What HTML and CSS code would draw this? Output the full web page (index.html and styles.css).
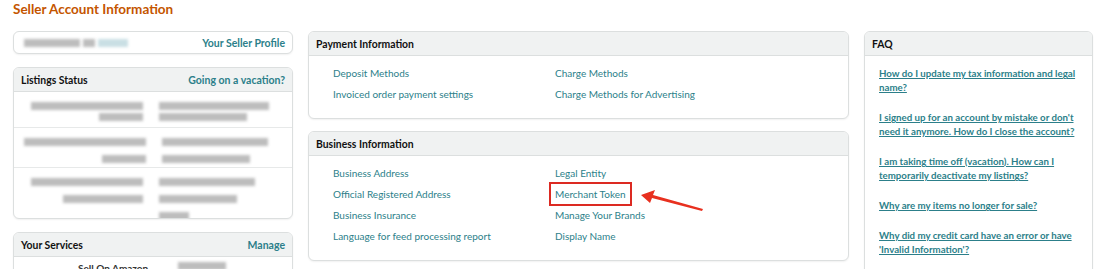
FILE: index.html
```html
<!DOCTYPE html>
<html lang="en">
<head>
    <meta charset="UTF-8">
    <title>Seller Account Information</title>
    <link rel="stylesheet" href="styles.css">
</head>
<body>
    <h1 class="page-title">Seller Account Information</h1>

    <div class="layout">
        <!-- Left column -->
        <div class="column">
            <div class="card profile-card">
                <div class="blur-group">
                    <span class="blur" style="width:56px"></span>
                    <span class="blur" style="width:12px"></span>
                    <span class="blur light" style="width:30px"></span>
                </div>
                <a href="#" class="link strong">Your Seller Profile</a>
            </div>

            <div class="card">
                <div class="card-header">
                    <span>Listings Status</span>
                    <a href="#" class="link strong">Going on a vacation?</a>
                </div>
                <div class="status-row r1">
                    <div class="blur-cell"><span class="blur" style="width:112px"></span><span class="blur" style="width:44px"></span></div>
                    <div class="blur-cell left"><span class="blur" style="width:110px"></span><span class="blur" style="width:88px"></span></div>
                </div>
                <div class="status-row r2">
                    <div class="blur-cell"><span class="blur" style="width:122px"></span><span class="blur" style="width:44px"></span></div>
                    <div class="blur-cell left"><span class="blur" style="width:106px"></span><span class="blur" style="width:88px"></span></div>
                </div>
                <div class="status-row r3">
                    <div class="blur-cell"><span class="blur" style="width:112px"></span><span class="blur" style="width:80px"></span></div>
                    <div class="blur-cell left"><span class="blur" style="width:96px"></span><span class="blur" style="width:78px"></span><span class="blur" style="width:30px"></span></div>
                </div>
            </div>

            <div class="card">
                <div class="card-header">
                    <span>Your Services</span>
                    <a href="#" class="link strong">Manage</a>
                </div>
                <div class="services-row">
                    <span class="service-name">Sell On Amazon</span>
                    <span class="blur" style="width:48px"></span>
                </div>
            </div>
        </div>

        <!-- Middle column -->
        <div class="column middle">
            <div class="card">
                <div class="card-header"><span>Payment Information</span></div>
                <div class="link-grid">
                    <a href="#" class="link">Deposit Methods</a>
                    <a href="#" class="link">Charge Methods</a>
                    <a href="#" class="link">Invoiced order payment settings</a>
                    <a href="#" class="link">Charge Methods for Advertising</a>
                </div>
            </div>

            <div class="card">
                <div class="card-header"><span>Business Information</span></div>
                <div class="link-grid">
                    <a href="#" class="link">Business Address</a>
                    <a href="#" class="link">Legal Entity</a>
                    <a href="#" class="link">Official Registered Address</a>
                    <span class="marked"><a href="#" class="link">Merchant Token</a>
                        <svg class="arrow" width="64" height="22" viewBox="0 0 64 22">
                            <polygon points="0,5 14,0 12,5 62,19 61,21 11,8 9,13" fill="#e8301f"/>
                        </svg>
                    </span>
                    <a href="#" class="link">Business Insurance</a>
                    <a href="#" class="link">Manage Your Brands</a>
                    <a href="#" class="link">Language for feed processing report</a>
                    <a href="#" class="link">Display Name</a>
                </div>
            </div>
        </div>

        <!-- FAQ column -->
        <div class="column">
            <div class="card">
                <div class="card-header"><span>FAQ</span></div>
                <ul class="faq-list">
                    <li><a href="#" class="faq-link">How do I update my tax information and legal name?</a></li>
                    <li><a href="#" class="faq-link">I signed up for an account by mistake or don't need it anymore. How do I close the account?</a></li>
                    <li><a href="#" class="faq-link">I am taking time off (vacation). How can I temporarily deactivate my listings?</a></li>
                    <li><a href="#" class="faq-link">Why are my items no longer for sale?</a></li>
                    <li><a href="#" class="faq-link">Why did my credit card have an error or have 'Invalid Information'?</a></li>
                </ul>
            </div>
        </div>
    </div>
</body>
</html>
```

FILE: styles.css
```css
body {
    font-family: Lato, "Open Sans", Arial, sans-serif;
    font-size: 10px;
    color: #111;
    margin: 0;
    padding: 0 13px;
    background: #fff;
    overflow: hidden;
}
.page-title {
    color: #c45500;
    font-size: 13.5px;
    font-weight: bold;
    margin: 0;
    line-height: 18px;
    height: 31px;
}
.layout {
    display: grid;
    grid-template-columns: 280px 541px 229px;
    column-gap: 15px;
    align-items: start;
}
.column {
    display: flex;
    flex-direction: column;
    gap: 13px;
}
.column.middle {
    gap: 12px;
}
.card {
    border: 1px solid #dcdfdf;
    border-radius: 6px;
    background: #fff;
    box-shadow: 0 1px 2px rgba(0, 0, 0, 0.06);
    overflow: hidden;
}
.card-header {
    background: #f0f2f2;
    border-bottom: 1px solid #dcdfdf;
    height: 23px;
    padding: 0 7px;
    display: flex;
    align-items: center;
    justify-content: space-between;
    font-weight: bold;
    font-size: 10.4px;
}
.link {
    color: #2c7f8a;
    text-decoration: none;
}
.link.strong {
    font-weight: bold;
    font-size: 10.5px;
}
.profile-card {
    height: 21px;
    display: flex;
    align-items: center;
    justify-content: space-between;
    padding: 0 7px 0 10px;
}
.blur-group {
    display: flex;
    gap: 3px;
}
.blur {
    display: inline-block;
    height: 8px;
    background: #bdbdbd;
    filter: blur(1.6px);
}
.blur.light {
    background: #c9dfe4;
}
.status-row {
    display: grid;
    grid-template-columns: 1fr 1fr;
    border-bottom: 1px solid #e7e9e9;
    padding: 0 10px;
}
.status-row:last-child {
    border-bottom: none;
}
.r1 { height: 35px; }
.r2 { height: 39px; }
.r3 { height: 50px; }
.blur-cell {
    display: flex;
    flex-direction: column;
    align-items: flex-end;
    gap: 3px;
    padding: 10px 10px 0 0;
}
.r2 .blur-cell,
.r3 .blur-cell {
    gap: 9px;
    padding-top: 10px;
}
.blur-cell.left {
    align-items: flex-start;
    padding-left: 6px;
}
.services-row {
    display: flex;
    gap: 30px;
    padding: 5px 0 0 64px;
    height: 20px;
}
.service-name {
    color: #333;
    font-weight: bold;
}
.link-grid {
    display: grid;
    grid-template-columns: 222px 1fr;
    row-gap: 7px;
    padding: 10px 24px 17px;
    line-height: 14px;
}
.marked {
    position: relative;
}
.marked .link {
    outline: 2px solid #dc2a22;
    outline-offset: 4px;
}
.arrow {
    position: absolute;
    left: 86px;
    top: 3px;
}
.faq-list {
    list-style: none;
    margin: 0;
    padding: 10px 14px 4px;
}
.faq-list li {
    margin-bottom: 16px;
    line-height: 14px;
}
.faq-link {
    color: #2c7f8a;
    font-weight: bold;
    font-size: 9.7px;
    text-decoration: underline;
}
```
